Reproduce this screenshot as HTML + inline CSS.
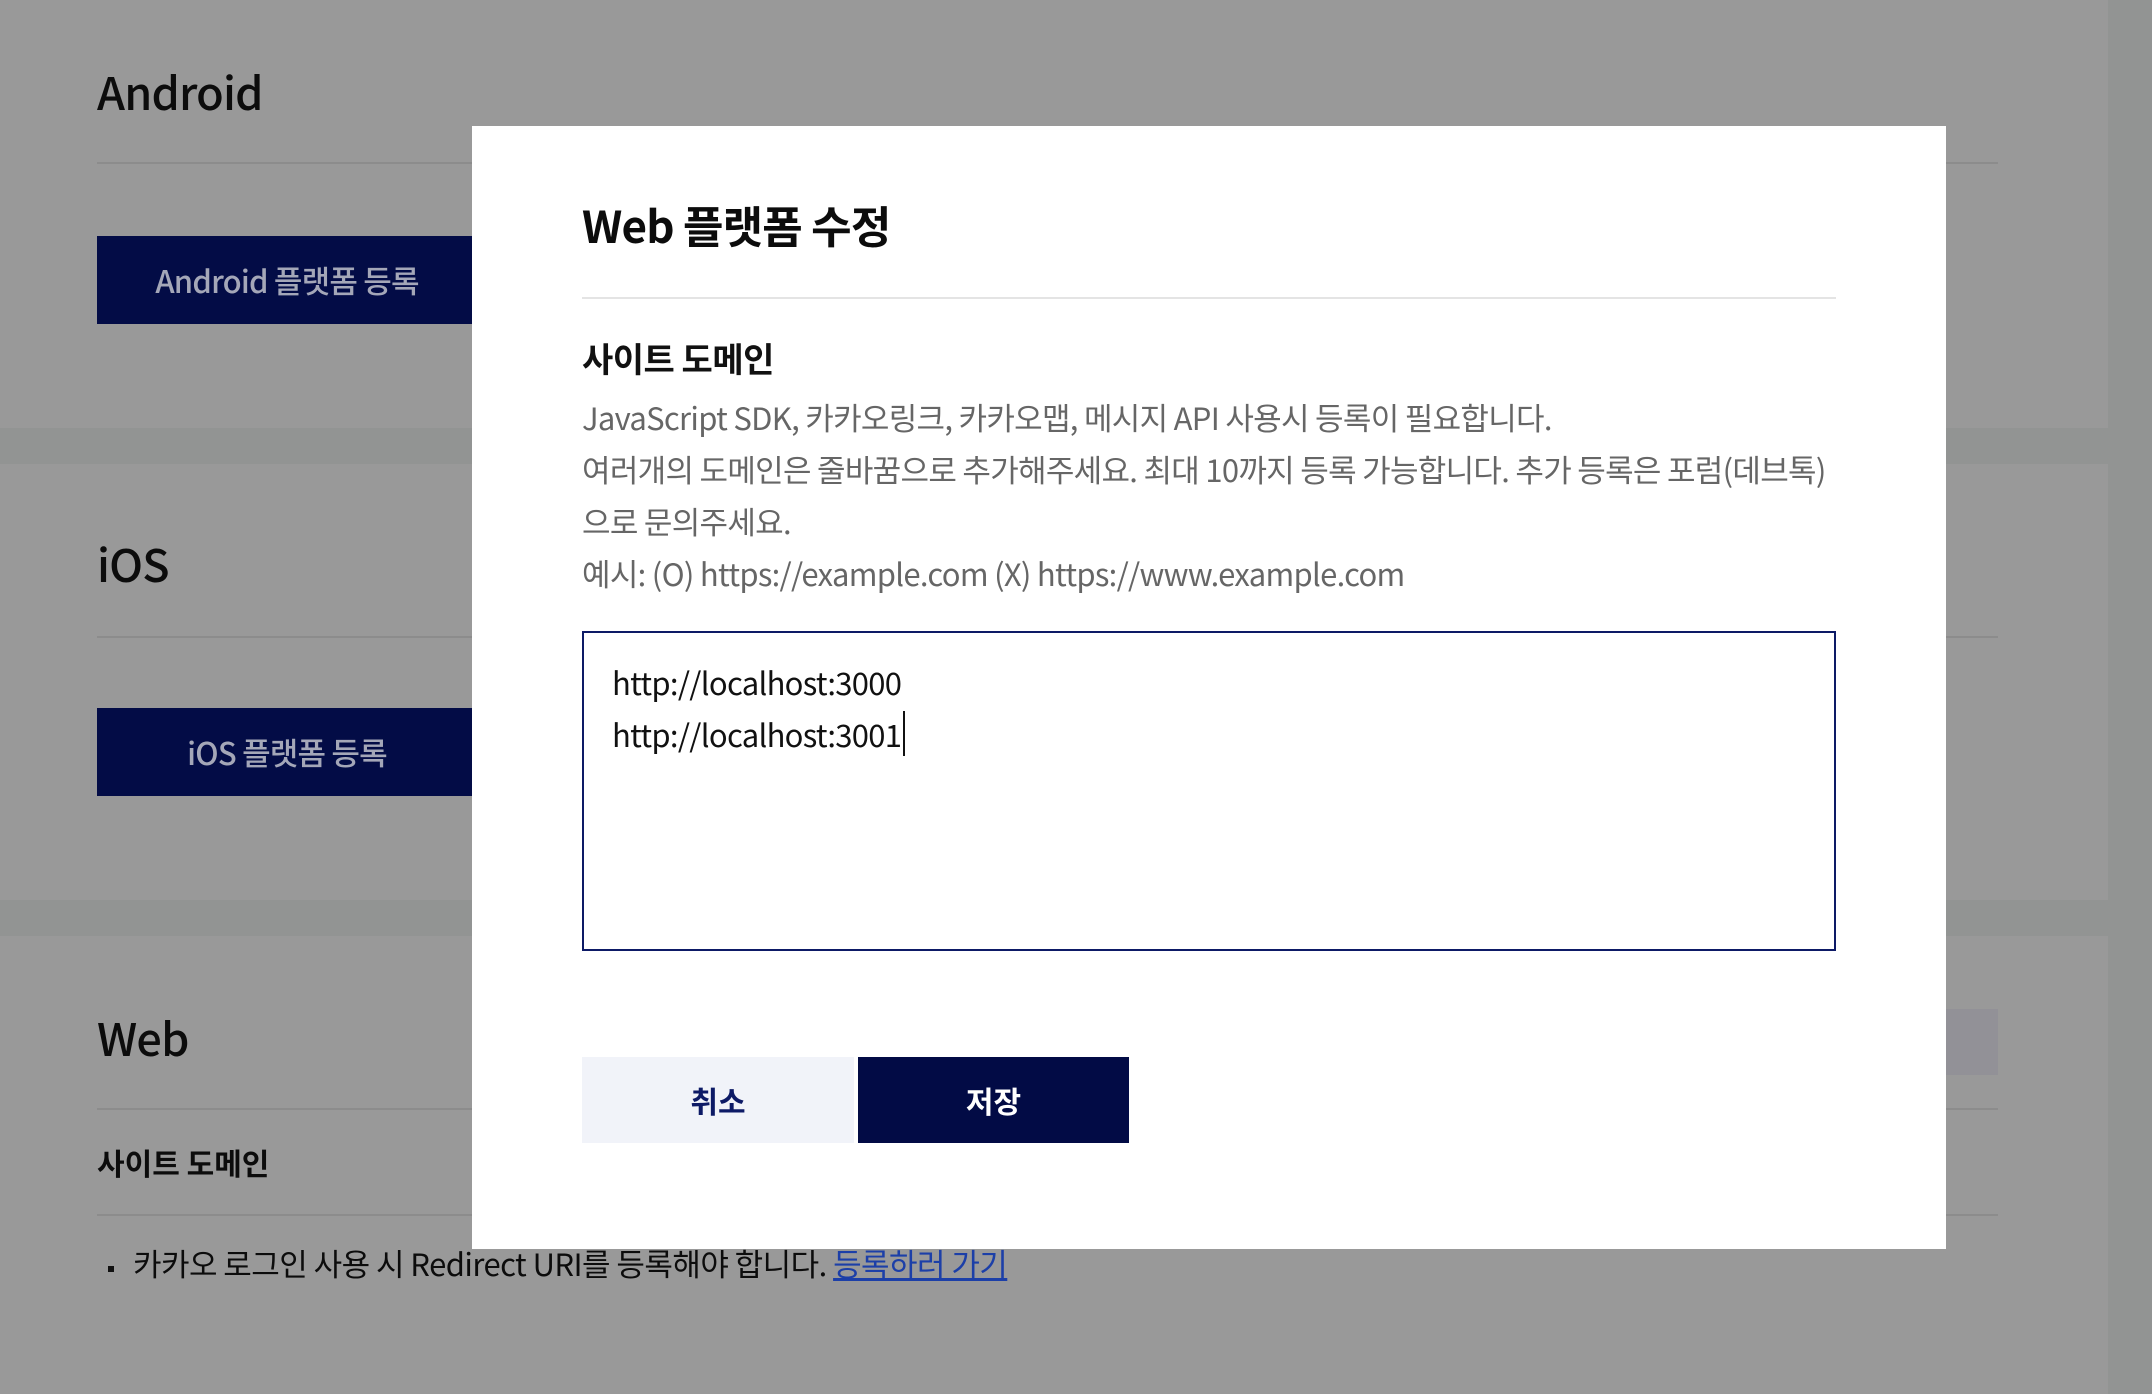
<!DOCTYPE html>
<html><head><meta charset="utf-8"><style>
*{margin:0;padding:0;box-sizing:border-box}
body{width:2152px;height:1394px;overflow:hidden;background:#929493;font-family:"Noto Sans CJK KR","Liberation Sans",sans-serif;position:relative;color:#0c0c0c}
.p{position:absolute;left:0;width:2108px;background:#999}
.abs{position:absolute;white-space:nowrap}
.h{font-size:45px;font-weight:500;letter-spacing:-0.8px}
.ln{position:absolute;left:97px;width:1901px;height:2px;background:#8c8c8c}
.btn{position:absolute;left:97px;width:380px;height:88px;background:#030c46;color:#a4a7b8;font-size:31px;font-weight:500;line-height:88px;text-align:center;letter-spacing:-0.8px}
.m{position:absolute;left:472px;top:126px;width:1474px;height:1123px;background:#fff}
.d{font-size:31px;color:#666;letter-spacing:-0.7px;line-height:52px}
</style></head><body>
<div class="p" style="top:0;height:428px"></div>
<div class="p" style="top:464px;height:436px"></div>
<div class="p" style="top:936px;height:458px"></div>
<div class="abs h" style="left:97px;top:58px">Android</div>
<div class="ln" style="top:162px"></div>
<div class="btn" style="top:236px">Android 플랫폼 등록</div>
<div class="abs h" style="left:97px;top:530px">iOS</div>
<div class="ln" style="top:636px"></div>
<div class="btn" style="top:708px">iOS 플랫폼 등록</div>
<div class="abs h" style="left:97px;top:1004px">Web</div>
<div class="ln" style="top:1108px"></div>
<div class="abs" style="left:1900px;top:1009px;width:98px;height:66px;background:#929197"></div>
<div class="abs" style="left:97px;top:1140px;font-size:30px;font-weight:700;letter-spacing:0px">사이트 도메인</div>
<div class="ln" style="top:1214px"></div>
<div class="abs" style="left:108px;top:1266px;width:6px;height:6px;background:#111"></div>
<div class="abs" style="left:133px;top:1240px;font-size:31px;letter-spacing:-0.55px">카카오 로그인 사용 시 Redirect URI를 등록해야 합니다. <span style="color:#1c3fa8;text-decoration:underline">등록하러 가기</span></div>
<div class="m">
<div class="abs" style="left:110px;top:66px;font-size:44px;font-weight:700;letter-spacing:-0.8px">Web 플랫폼 수정</div>
<div class="abs" style="left:110px;top:171px;width:1254px;height:2px;background:#e4e4e4"></div>
<div class="abs" style="left:110px;top:207px;font-size:34px;font-weight:700;color:#111;letter-spacing:-0.5px">사이트 도메인</div>
<div class="abs d" style="left:110px;top:265px">JavaScript SDK, 카카오링크, 카카오맵, 메시지 API 사용시 등록이 필요합니다.<br>여러개의 도메인은 줄바꿈으로 추가해주세요. 최대 10까지 등록 가능합니다. 추가 등록은 포럼(데브톡)<br>으로 문의주세요.<br>예시: (O) https://example.com (X) https://www.example.com</div>
<div class="abs" style="left:110px;top:505px;width:1254px;height:320px;border:2px solid #0d1a66"></div>
<div class="abs" style="left:140px;top:530px;font-size:31px;line-height:52px;color:#111;letter-spacing:-0.7px">http://localhost:3000<br>http://localhost:3001<span style="border-left:2px solid #111;margin-left:2px"></span></div>
<div class="abs" style="left:110px;top:931px;width:272px;height:86px;background:#f1f3f9;color:#0d1a66;font-size:30px;font-weight:700;line-height:86px;text-align:center">취소</div>
<div class="abs" style="left:386px;top:931px;width:271px;height:86px;background:#020b45;color:#fff;font-size:30px;font-weight:700;line-height:86px;text-align:center">저장</div>
</div>
</body></html>
